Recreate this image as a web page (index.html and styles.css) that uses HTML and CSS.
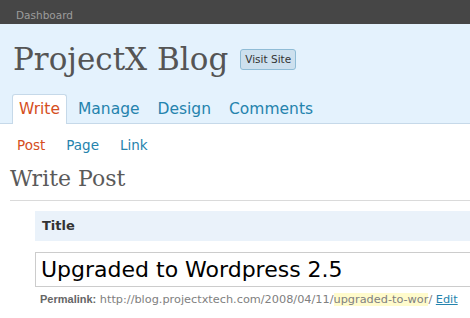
FILE: index.html
```html
<!DOCTYPE html>
<html lang="en">
<head>
    <meta charset="UTF-8">
    <title>Write Post &lsaquo; ProjectX Blog</title>
    <link rel="stylesheet" href="styles.css">
</head>
<body>
    <div id="topbar">
        <span class="dash">Dashboard</span>
    </div>

    <div id="head">
        <div class="blog-title">
            <h1>ProjectX Blog</h1>
            <a class="visit" href="#">Visit Site</a>
        </div>
        <ul class="tabs">
            <li class="current"><a href="#">Write</a></li>
            <li><a href="#">Manage</a></li>
            <li><a href="#">Design</a></li>
            <li><a href="#">Comments</a></li>
        </ul>
    </div>

    <ul class="submenu">
        <li class="current"><a href="#">Post</a></li>
        <li><a href="#">Page</a></li>
        <li><a href="#">Link</a></li>
    </ul>

    <div class="wrap">
        <h2>Write Post</h2>

        <div class="post-body">
            <h3 class="box-title">Title</h3>
            <div class="title-input">Upgraded to Wordpress 2.5</div>
            <div class="permalink">
                <strong>Permalink:</strong> http://blog.projectxtech.com/2008/04/11/<span class="slug">upgraded-to-wor</span>/ <a href="#">Edit</a>
            </div>
        </div>
    </div>
</body>
</html>
```

FILE: styles.css
```css
:root {
    --top-bg: #464646;
    --head-bg: #e4f2fd;
    --link: #2583ad;
    --current: #d54e21;
    --rule: #c6d9e9;
}

body {
    margin: 0;
    background: #fff;
    font-family: "DejaVu Sans", Verdana, sans-serif;
    color: #333;
    overflow: hidden;
}

a {
    text-decoration: none;
}

ul {
    list-style: none;
    margin: 0;
    padding: 0;
}

#topbar {
    height: 24px;
    background: var(--top-bg);
    padding-left: 16px;
    line-height: 27px;
}

#topbar .dash {
    font-size: 10.5px;
    color: #9c9c9c;
}

#head {
    background: var(--head-bg);
    border-bottom: 1px solid var(--rule);
    padding: 0 0 0 12px;
}

.blog-title {
    display: flex;
    align-items: center;
    gap: 12px;
    height: 70px;
    padding-left: 1px;
}

.blog-title h1 {
    margin: 0;
    font-family: "DejaVu Serif", Georgia, serif;
    font-weight: normal;
    font-size: 31px;
    color: #555;
}

.visit {
    font-size: 10.5px;
    color: #333;
    background: #cde0ee;
    border: 1px solid #8fbcd6;
    border-radius: 3px;
    padding: 3px 4px 4px;
    margin-top: 1px;
}

.tabs {
    display: flex;
    gap: 4px;
    height: 29px;
}

.tabs li {
    border: 1px solid transparent;
    border-bottom: none;
    border-radius: 3px 3px 0 0;
    margin-bottom: -1px;
    height: 29px;
}

.tabs li a {
    display: block;
    font-size: 15.5px;
    color: var(--link);
    padding: 0 6px;
    line-height: 28px;
}

.tabs li.current {
    background: #fff;
    border-color: var(--rule);
}

.tabs li.current a {
    color: var(--current);
}

.submenu {
    display: flex;
    gap: 21px;
    padding: 11px 0 0 17px;
    height: 22px;
}

.submenu a {
    font-size: 13.5px;
    color: var(--link);
}

.submenu .current a {
    color: var(--current);
}

.wrap {
    padding-left: 10px;
}

.wrap h2 {
    margin: 5px 0 0;
    padding-bottom: 4px;
    font-family: "DejaVu Serif", Georgia, serif;
    font-weight: normal;
    font-size: 22px;
    color: #5a5a5a;
    line-height: 34px;
    border-bottom: 1px solid #dadada;
}

.post-body {
    padding: 10px 0 0 25px;
    width: calc(100% + 20px);
}

.box-title {
    margin: 0;
    background: #eaf2fa;
    height: 30px;
    line-height: 30px;
    padding-left: 7px;
    font-size: 13px;
    font-weight: bold;
    color: #333;
}

.title-input {
    margin-top: 11px;
    height: 33px;
    border: 1px solid #ccc;
    border-right: none;
    padding-left: 5px;
    font-size: 22px;
    line-height: 33px;
    color: #000;
}

.permalink {
    padding: 6px 0 0 5px;
    font-size: 11.3px;
    color: #808080;
    white-space: nowrap;
}

.permalink strong {
    font-family: "Liberation Sans", Arial, sans-serif;
    font-size: 11px;
    color: #666;
}

.permalink .slug {
    background: #fffbcc;
}

.permalink a {
    color: var(--link);
    text-decoration: underline;
}
```
